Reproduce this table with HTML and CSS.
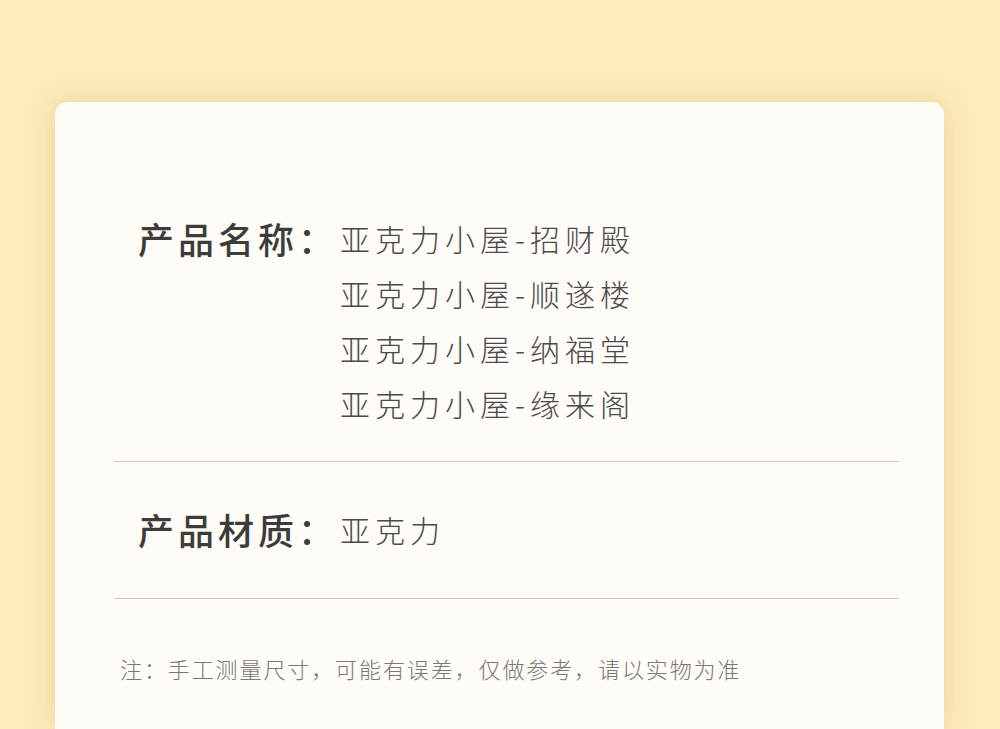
FILE: index.html
```html
<!DOCTYPE html>
<html lang="zh-CN">
<head>
    <meta charset="UTF-8">
    <meta name="viewport" content="width=device-width, initial-scale=1.0">
    <title>产品信息</title>
    <link rel="stylesheet" href="styles.css">
</head>
<body>

    <div class="card">
        <div class="info-row first">
            <div class="label">产品名称：</div>
            <div class="values">
                <p>亚克力小屋-招财殿</p>
                <p>亚克力小屋-顺遂楼</p>
                <p>亚克力小屋-纳福堂</p>
                <p>亚克力小屋-缘来阁</p>
            </div>
        </div>

        <div class="info-row second">
            <div class="label">产品材质：</div>
            <div class="values">
                <p>亚克力</p>
            </div>
        </div>

        <p class="note">注：手工测量尺寸，可能有误差，仅做参考，请以实物为准</p>
    </div>

</body>
</html>
```

FILE: styles.css
```css
/* 基本样式 */
html {
    overflow: hidden;
}

body {
    margin: 0;
    padding: 102px 0 0;
    background-color: #fcebbb;
    font-family: "Noto Sans CJK SC", sans-serif;
    height: 729px;
    box-sizing: border-box;
}

.card {
    box-sizing: border-box;
    margin: 0 56px 0 55px;
    padding: 109px 45px 0 59px;
    height: 627px;
    background-color: #fffbf6;
    border-radius: 12px 12px 0 0;
    box-shadow: 0 0 24px rgba(200, 170, 80, 0.35);
}

.info-row {
    display: flex;
    align-items: flex-start;
    padding-left: 24px;
    border-bottom: 1px solid #cdc8c2;
}

.info-row.first {
    padding-bottom: 30px;
}

.info-row.second {
    padding-top: 40px;
    padding-bottom: 41px;
}

.label {
    width: 202px;
    font-size: 36px;
    font-weight: 500;
    letter-spacing: 4px;
    line-height: 55px;
    color: #3c3c3c;
}

.values p {
    margin: 0;
    font-size: 30px;
    font-weight: 300;
    letter-spacing: 5px;
    line-height: 55px;
    color: #4a4a4a;
}

.note {
    margin: 44px 0 0 6px;
    font-size: 22px;
    font-weight: 300;
    letter-spacing: 1.9px;
    line-height: 50px;
    color: #777;
}
```
